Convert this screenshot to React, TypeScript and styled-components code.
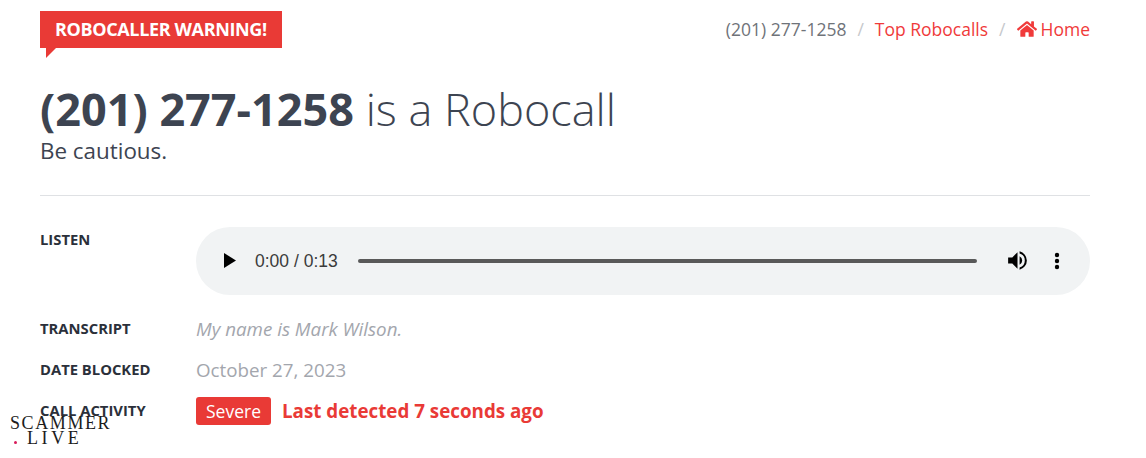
import styled, { createGlobalStyle } from "styled-components";
import { FaHome } from "react-icons/fa";

const GlobalStyle = createGlobalStyle`
    html, body {
        margin: 0;
        background: #fff;
    }
    body {
        font-family: "Open Sans", sans-serif;
        color: #3d4451;
        overflow: hidden;
    }
`;

const Page = styled.div`
    position: relative;
    width: 1146px;
    height: 458px;
    box-sizing: border-box;
    padding: 11px 56px 0 40px;
    overflow: hidden;
`;

const TopRow = styled.div`
    display: flex;
    justify-content: space-between;
    align-items: flex-start;
`;

const Badge = styled.div`
    position: relative;
    height: 37px;
    line-height: 36px;
    padding: 0 15px;
    background: #e93a36;
    color: #fff;
    font-size: 18px;
    font-weight: 700;
    letter-spacing: -0.36px;

    &::after {
        content: "";
        position: absolute;
        left: 6px;
        top: 37px;
        border-top: 10px solid #e93a36;
        border-right: 10px solid transparent;
    }
`;

const Crumbs = styled.nav`
    display: flex;
    align-items: center;
    height: 36px;
    font-size: 17.5px;
    color: #6f7379;
`;

const CrumbLink = styled.span`
    display: inline-flex;
    align-items: center;
    gap: 4px;
    color: #f03a3a;
`;

const Slash = styled.span`
    margin: 0 11px;
    color: #c6c8cc;
`;

const Title = styled.h1`
    margin: 34px 0 0;
    font-size: 45px;
    line-height: 54px;
    font-weight: 300;
    color: #3d4451;

    strong {
        font-weight: 700;
    }
`;

const Subtitle = styled.p`
    margin: 0;
    font-size: 22.4px;
    line-height: 30px;
    color: #3d4451;
`;

const Divider = styled.hr`
    margin: 29px 0 31px;
    border: 0;
    border-top: 1px solid #dfe1e4;
`;

const Fields = styled.dl`
    display: grid;
    grid-template-columns: 156px 1fr;
    margin: 0;
`;

const Label = styled.dt<{ $gap: number }>`
    margin-bottom: ${p => p.$gap}px;
    font-size: 14.8px;
    line-height: 26px;
    font-weight: 700;
    color: #2b303a;
    text-transform: uppercase;
`;

const ListenLabel = styled(Label)`
    margin-top: -1px;
`;

const Value = styled.dd<{ $gap: number }>`
    display: flex;
    align-items: center;
    min-width: 0;
    margin: 0 0 ${p => p.$gap}px;
    font-size: 18.75px;
    line-height: 28px;
    color: #a3a6ad;
`;

const Transcript = styled.em`
    font-style: italic;
`;

const Player = styled.div`
    display: flex;
    align-items: center;
    width: 100%;
    height: 68px;
    box-sizing: border-box;
    padding: 0 30px 1px 28px;
    border-radius: 34px;
    background: #f1f3f4;
    color: #000;
`;

const Time = styled.span`
    margin-left: 19px;
    font-family: "Liberation Sans", Arial, sans-serif;
    font-size: 17.5px;
    color: #3b3b3b;
    white-space: nowrap;
`;

const Track = styled.div`
    flex: 1;
    height: 4px;
    margin: 0 28px 0 20px;
    border-radius: 2px;
    background: #595959;
`;

const VolumeSvg = styled.svg`
    margin-right: 24px;
`;

const Severity = styled.span`
    padding: 0 10px;
    border-radius: 3px;
    background: #e93a36;
    color: #fff;
    font-size: 17.5px;
    line-height: 28px;
`;

const Detected = styled.span`
    margin-left: 11px;
    color: #e93a36;
    font-size: 18.8px;
    font-weight: 700;
`;

const Watermark = styled.div`
    position: absolute;
    left: 10px;
    top: 416px;
    font-family: "Liberation Serif", serif;
    font-size: 18px;
    line-height: 15px;
    color: #1c1c1c;
`;

const WatermarkLine = styled.div<{ $indent: number; $spacing: number }>`
    padding-left: ${p => p.$indent}px;
    letter-spacing: ${p => p.$spacing}px;
`;

const WatermarkDot = styled.i`
    position: absolute;
    left: 4px;
    top: 25px;
    width: 3px;
    height: 3px;
    border-radius: 50%;
    background: #d81b5a;
`;

const PlayIcon = () => (
    <svg width="12" height="15" viewBox="0 0 12 15"><path d="M0 0v15l12-7.5z" fill="#000" /></svg>
);

const VolumeIcon = () => (
    <VolumeSvg width="25" height="25" viewBox="0 0 24 24">
        <path d="M3 9v6h4l5 5V4L7 9H3zm13.5 3A4.5 4.5 0 0 0 14 7.97v8.05A4.5 4.5 0 0 0 16.5 12zM14 3.23v2.06a7 7 0 0 1 0 13.42v2.06a9 9 0 0 0 0-17.54z" fill="#000" />
    </VolumeSvg>
);

const MoreIcon = () => (
    <svg width="6" height="18" viewBox="0 0 6 18"><circle cx="3" cy="3" r="2.2" /><circle cx="3" cy="9" r="2.2" /><circle cx="3" cy="15" r="2.2" /></svg>
);

export default function App() {
    return (
        <Page>
            <GlobalStyle />
            <TopRow>
                <Badge>ROBOCALLER WARNING!</Badge>
                <Crumbs>
                    <span>(201) 277-1258</span>
                    <Slash>/</Slash>
                    <CrumbLink>Top Robocalls</CrumbLink>
                    <Slash>/</Slash>
                    <CrumbLink><FaHome size={20} />Home</CrumbLink>
                </Crumbs>
            </TopRow>
            <Title><strong>(201) 277-1258</strong> is a Robocall</Title>
            <Subtitle>Be cautious.</Subtitle>
            <Divider />
            <Fields>
                <ListenLabel $gap={20}>Listen</ListenLabel>
                <Value $gap={20}>
                    <Player>
                        <PlayIcon />
                        <Time>0:00 / 0:13</Time>
                        <Track />
                        <VolumeIcon />
                        <MoreIcon />
                    </Player>
                </Value>
                <Label $gap={13}>Transcript</Label>
                <Value $gap={13}><Transcript>My name is Mark Wilson.</Transcript></Value>
                <Label $gap={13}>Date Blocked</Label>
                <Value $gap={13}>October 27, 2023</Value>
                <Label $gap={0}>Call Activity</Label>
                <Value $gap={0}>
                    <Severity>Severe</Severity>
                    <Detected>Last detected 7 seconds ago</Detected>
                </Value>
            </Fields>
            <Watermark>
                <WatermarkLine $indent={0} $spacing={1.6}>SCAMMER</WatermarkLine>
                <WatermarkLine $indent={17} $spacing={3.6}>LIVE</WatermarkLine>
                <WatermarkDot />
            </Watermark>
        </Page>
    );
}
